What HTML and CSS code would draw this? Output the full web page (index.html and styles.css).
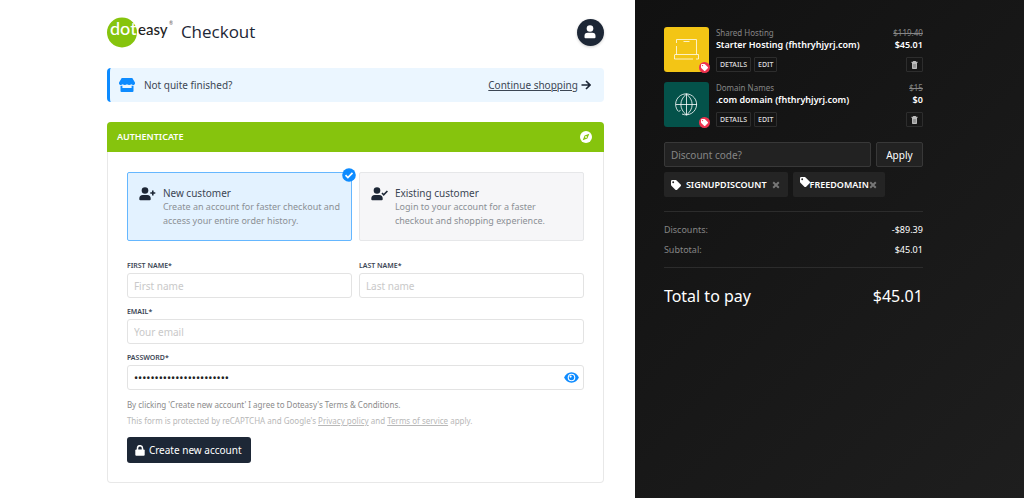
FILE: index.html
```html
<!DOCTYPE html>
<html lang="en">
<head>
    <meta charset="UTF-8">
    <meta name="viewport" content="width=device-width, initial-scale=1.0">
    <title>Doteasy - Checkout</title>
    <link rel="stylesheet" href="styles.css">
</head>
<body>
    <!-- Shared shapes -->
    <svg width="0" height="0" class="sprite" aria-hidden="true">
        <symbol id="tag" viewBox="0 0 16 16">
            <path d="M0 2a2 2 0 0 1 2-2h5.600a2 2 0 0 1 1.400.6l6.400 6.400a2 2 0 0 1 0 2.800l-5.600 5.600a2 2 0 0 1-2.800 0L.6 9A2 2 0 0 1 0 7.600zM3.500 2a1.500 1.500 0 1 0 0 3 1.500 1.500 0 0 0 0-3z"/>
        </symbol>
        <symbol id="trash" viewBox="0 0 14 16">
            <path d="M4.500 0h5l.6 1.500H13V4H1V1.500h2.900zM2 4h10v10.500a1.500 1.500 0 0 1-1.500 1.500h-7A1.500 1.500 0 0 1 2 14.500z"/>
            <path d="M4.800 6v7.500M7 6v7.500M9.200 6v7.500" stroke="#555" stroke-width=".8"/>
        </symbol>
        <symbol id="cross" viewBox="0 0 10 10">
            <path d="M1.500 1.500l7 7M8.500 1.500l-7 7" stroke="currentColor" stroke-width="2.400"/>
        </symbol>
    </svg>

    <div class="page">
        <main class="checkout">
            <div class="checkout-inner">
                <header class="top-bar">
                    <a href="#" class="logo" aria-label="doteasy">
                        <svg width="66" height="31" viewBox="0 0 66 31">
                            <circle cx="15" cy="15.500" r="15" fill="#86c40d"/>
                            <text x="3" y="18" class="logo-dot">dot</text>
                            <text x="31" y="18" class="logo-easy">easy</text>
                            <text x="62" y="8" class="logo-mark">®</text>
                        </svg>
                    </a>
                    <h1>Checkout</h1>
                    <button type="button" class="avatar" aria-label="Account">
                        <svg width="12" height="14" viewBox="0 0 12 14">
                            <circle cx="6" cy="3.500" r="3.300"/>
                            <path d="M.5 11a3.200 3.200 0 0 1 3.200-3.200h4.600A3.200 3.200 0 0 1 11.500 11v1.200a1 1 0 0 1-1 1h-9a1 1 0 0 1-1-1z"/>
                        </svg>
                    </button>
                </header>

                <div class="notice">
                    <svg class="notice-icon" width="16" height="14" viewBox="0 0 16 14">
                        <path d="M2.700 0h10.600l2.500 4.200c.6 1.400-.1 2.800-1.600 2.800-.8 0-1.400-.3-1.900-.8-.5.5-1.200.8-2.100.8S8.500 6.700 8 6.200c-.5.5-1.300.8-2.200.8s-1.600-.3-2.100-.8c-.5.5-1.100.8-1.900.8C.3 7-.4 5.600.2 4.200z"/>
                        <path d="M1.500 7.800h1.900V10h9.200V7.800h1.900v5.200a1 1 0 0 1-1 1h-11a1 1 0 0 1-1-1z"/>
                    </svg>
                    <span>Not quite finished?</span>
                    <div class="notice-link">
                        <a href="#">Continue shopping</a>
                        <svg width="10" height="10" viewBox="0 0 10 10">
                            <path d="M.5 5h8M5 1l4 4-4 4" fill="none" stroke="#1d2736" stroke-width="1.600"/>
                        </svg>
                    </div>
                </div>

                <section class="panel">
                    <div class="panel-header">
                        <h2>AUTHENTICATE</h2>
                        <svg width="12" height="12" viewBox="0 0 12 12">
                            <circle cx="6" cy="6" r="6" fill="#fff"/>
                            <path d="M9.300 2.700L7.400 7.400 2.700 9.300l1.900-4.700z" fill="#86c40d"/>
                            <circle cx="6" cy="6" r=".9" fill="#fff"/>
                        </svg>
                    </div>
                    <form class="panel-body">
                        <div class="options">
                            <label class="option selected">
                                <input type="radio" name="customer" value="new" checked>
                                <svg width="17" height="14" viewBox="0 0 17 14">
                                    <circle cx="6" cy="3.500" r="3.300"/>
                                    <path d="M.3 11.500A3.500 3.500 0 0 1 3.800 8h4.400a3.500 3.500 0 0 1 3.500 3.500v.7a1 1 0 0 1-1 1H1.300a1 1 0 0 1-1-1z"/>
                                    <path d="M13.800 3.500v5M11.300 6h5" stroke="#1d2736" stroke-width="1.600"/>
                                </svg>
                                <span class="option-text">
                                    <span class="option-title">New customer</span>
                                    <span>Create an account for faster checkout and<br>access your entire order history.</span>
                                </span>
                                <svg class="option-check" width="14" height="14" viewBox="0 0 14 14">
                                    <circle cx="7" cy="7" r="6.800" fill="#0d8bff"/>
                                    <path d="M3.500 7.200l2.400 2.400 4.600-4.700" fill="none" stroke="#fff" stroke-width="1.700"/>
                                </svg>
                            </label>
                            <label class="option">
                                <input type="radio" name="customer" value="existing">
                                <svg width="17" height="14" viewBox="0 0 17 14">
                                    <circle cx="6" cy="3.500" r="3.300"/>
                                    <path d="M.3 11.500A3.500 3.500 0 0 1 3.800 8h4.400a3.500 3.500 0 0 1 3.500 3.500v.7a1 1 0 0 1-1 1H1.300a1 1 0 0 1-1-1z"/>
                                    <path d="M11 6l1.700 1.800 3.700-3.800" fill="none" stroke="#1d2736" stroke-width="1.600"/>
                                </svg>
                                <span class="option-text">
                                    <span class="option-title">Existing customer</span>
                                    <span>Login to your account for a faster<br>checkout and shopping experience.</span>
                                </span>
                            </label>
                        </div>

                        <div class="field-row">
                            <div class="field">
                                <label for="first-name">FIRST NAME*</label>
                                <input type="text" id="first-name" placeholder="First name">
                            </div>
                            <div class="field">
                                <label for="last-name">LAST NAME*</label>
                                <input type="text" id="last-name" placeholder="Last name">
                            </div>
                        </div>
                        <div class="field">
                            <label for="email">EMAIL*</label>
                            <input type="email" id="email" placeholder="Your email">
                        </div>
                        <div class="field">
                            <label for="password">PASSWORD*</label>
                            <div class="password-box">
                                <input type="password" id="password" value="abcdefghijklmnopqrstuvw">
                                <button type="button" aria-label="Show password">
                                    <svg width="15" height="11" viewBox="0 0 15 11">
                                        <path d="M7.500.3C11 .3 13.600 2.600 14.900 5.500 13.600 8.400 11 10.700 7.500 10.700S1.400 8.400.1 5.500C1.400 2.600 4 .3 7.500.3z" fill="#0d8bff"/>
                                        <circle cx="7.500" cy="5.500" r="3.800" fill="#fff"/>
                                        <circle cx="7.500" cy="5.500" r="2.700" fill="#0d8bff"/>
                                        <circle cx="6.600" cy="4.600" r="1.100" fill="#fff"/>
                                    </svg>
                                </button>
                            </div>
                        </div>

                        <p class="terms">By clicking 'Create new account' I agree to Doteasy's Terms &amp; Conditions.</p>
                        <p class="captcha">This form is protected by reCAPTCHA and Google's <a href="#">Privacy policy</a> and <a href="#">Terms of service</a> apply.</p>
                        <button type="submit" class="submit">
                            <svg width="10" height="11" viewBox="0 0 10 11">
                                <path d="M2.500 5V3.200a2.500 2.500 0 0 1 5 0V5" fill="none" stroke="#fff" stroke-width="1.500"/>
                                <rect x=".3" y="4.600" width="9.400" height="6.200" rx="1" fill="#fff"/>
                            </svg>
                            Create new account
                        </button>
                    </form>
                </section>
            </div>
        </main>

        <aside class="summary">
            <div class="summary-inner">
                <div class="item">
                    <div class="thumb hosting">
                        <svg width="27" height="23" viewBox="0 0 27 23">
                            <path d="M3.500 5V1.500h20V16M3.500 8v8.500M10.500 3.500h6M2 16.500h23.500v4.500H23M20 21H1.500v-4.500" fill="none" stroke="#fff" stroke-opacity=".75"/>
                        </svg>
                        <span class="badge"><svg width="7" height="7"><use href="#tag"/></svg></span>
                    </div>
                    <div class="item-info">
                        <div class="line"><span>Shared Hosting</span><s>$119.40</s></div>
                        <div class="line strong"><span>Starter Hosting (fhthryhjyrj.com)</span><span>$45.01</span></div>
                        <div class="actions">
                            <button type="button">DETAILS</button>
                            <button type="button">EDIT</button>
                            <button type="button" class="remove" aria-label="Remove"><svg width="7" height="8"><use href="#trash"/></svg></button>
                        </div>
                    </div>
                </div>
                <div class="item">
                    <div class="thumb domain">
                        <svg width="23" height="23" viewBox="0 0 23 23">
                            <path d="M3 18A10.500 10.500 0 1 1 7 21M11.500 1v21M1 11.500h21M11.500 1C4 7 4 16 11.500 22M11.500 1C19 7 19 16 11.500 22M3.500 18.500l2-1" fill="none" stroke="#fff" stroke-opacity=".8"/>
                        </svg>
                        <span class="badge"><svg width="7" height="7"><use href="#tag"/></svg></span>
                    </div>
                    <div class="item-info">
                        <div class="line"><span>Domain Names</span><s>$15</s></div>
                        <div class="line strong"><span>.com domain (fhthryhjyrj.com)</span><span>$0</span></div>
                        <div class="actions">
                            <button type="button">DETAILS</button>
                            <button type="button">EDIT</button>
                            <button type="button" class="remove" aria-label="Remove"><svg width="7" height="8"><use href="#trash"/></svg></button>
                        </div>
                    </div>
                </div>

                <form class="discount">
                    <input type="text" placeholder="Discount code?" aria-label="Discount code">
                    <button type="submit">Apply</button>
                </form>
                <div class="coupons">
                    <div class="coupon">
                        <svg width="10" height="10"><use href="#tag"/></svg>
                        <span>SIGNUPDISCOUNT</span>
                        <button type="button" aria-label="Remove SIGNUPDISCOUNT"><svg width="8" height="8"><use href="#cross"/></svg></button>
                    </div>
                    <div class="coupon tight">
                        <svg width="10" height="10"><use href="#tag"/></svg>
                        <span>FREEDOMAIN</span>
                        <button type="button" aria-label="Remove FREEDOMAIN"><svg width="8" height="8"><use href="#cross"/></svg></button>
                    </div>
                </div>

                <dl class="totals">
                    <div><dt>Discounts:</dt><dd>-$89.39</dd></div>
                    <div><dt>Subtotal:</dt><dd>$45.01</dd></div>
                </dl>
                <div class="total">
                    <span>Total to pay</span>
                    <span>$45.01</span>
                </div>
            </div>
        </aside>
    </div>
</body>
</html>
```
FILE: styles.css
```css
* {
    box-sizing: border-box;
}
body {
    margin: 0;
    font-family: 'Segoe UI', 'Noto Sans', 'Open Sans', sans-serif;
    font-size: 9px;
    line-height: 14px;
    color: #3c4654;
    background-color: #fff;
}
button, input {
    font-family: inherit;
    font-size: inherit;
    line-height: inherit;
    margin: 0;
}
button {
    display: flex;
    align-items: center;
    justify-content: center;
    padding: 0;
    border: none;
    background: none;
    cursor: pointer;
}
h1, h2, p, dl, dd {
    margin: 0;
}
svg {
    flex-shrink: 0;
}
.sprite {
    position: absolute;
}
.page {
    display: flex;
    min-height: 100vh;
}
.checkout {
    flex: 0 0 62%;
    padding: 16px 31px 15px;
}
.checkout-inner {
    max-width: 497px;
    margin-left: auto;
}

/* Header */
.top-bar {
    display: flex;
    align-items: center;
    gap: 8px;
    margin-bottom: 20px;
}
.logo {
    display: flex;
}
.logo text {
    font-family: Lato, 'Open Sans', sans-serif;
}
.logo-dot {
    font-size: 18px;
    font-weight: 500;
    fill: #fff;
}
.logo-easy {
    font-size: 15px;
    font-weight: 500;
    fill: #222;
}
.logo .logo-mark {
    font-size: 5px;
    fill: #555;
}
h1 {
    font-size: 17px;
    line-height: 32px;
    font-weight: 500;
    font-family: 'Segoe UI', 'Open Sans', sans-serif;
    color: #1d2736;
}
.avatar {
    width: 27px;
    height: 27px;
    margin-left: auto;
    border-radius: 50%;
    background-color: #1d2736;
    fill: #fff;
    box-shadow: 0 1px 3px rgba(0, 0, 0, 0.2);
}

/* Continue shopping */
.notice {
    display: flex;
    align-items: center;
    gap: 9px;
    height: 34px;
    padding: 0 13px 0 9px;
    margin-bottom: 20px;
    border-left: 3px solid #0d8bff;
    border-radius: 4px;
    background-color: #ebf6ff;
    font-size: 10px;
}
.notice-icon {
    fill: #0d8bff;
}
.notice-link {
    display: flex;
    align-items: center;
    gap: 3px;
    margin-left: auto;
}
.notice-link a {
    color: inherit;
}

/* Authenticate panel */
.panel {
    border-radius: 4px;
    box-shadow: inset 0 0 0 1px #e8e8e8;
}
.panel-header {
    display: flex;
    align-items: center;
    justify-content: space-between;
    height: 30px;
    padding: 0 12px 0 10px;
    border-radius: 4px 4px 0 0;
    background-color: #86c40d;
}
.panel-header h2 {
    font-size: 9px;
    font-weight: 600;
    color: #fff;
}
.panel-body {
    padding: 20px;
}
.options, .field-row {
    display: grid;
    grid-template-columns: 1fr 1fr;
    gap: 7px;
}
.options {
    margin-bottom: 18px;
}
.option {
    position: relative;
    display: flex;
    gap: 7px;
    padding: 13px 5px 12px 11px;
    border: 1px solid #e6e7e9;
    border-radius: 2px;
    background-color: #f6f6f8;
    color: #8b9095;
    fill: #1d2736;
    cursor: pointer;
}
.option.selected {
    border-color: #65b7ff;
    background-color: #e3f2ff;
}
.option input {
    position: absolute;
    opacity: 0;
}
.option > svg {
    margin-top: 1px;
}
.option-text span {
    display: block;
}
.option-text .option-title {
    font-size: 10px;
    color: #3c4654;
}
.option > .option-check {
    position: absolute;
    top: -6px;
    right: -5px;
}
.field {
    margin-bottom: 7px;
}
.field label {
    display: block;
    font-size: 7px;
    font-weight: 600;
    color: #3c4654;
}
.field input {
    display: block;
    width: 100%;
    height: 25px;
    padding: 0 6px;
    border: 1px solid #e3e3e3;
    border-radius: 3px;
    font-size: 10px;
    color: #222;
    outline: none;
}
.field input::placeholder {
    color: #c9c9c9;
    opacity: 1;
}
.password-box {
    position: relative;
}
.field .password-box input {
    font-size: 11px;
}
.password-box button {
    position: absolute;
    top: 0;
    right: 5px;
    height: 100%;
}
.terms, .captcha {
    font-size: 8px;
    line-height: 16px;
}
.terms {
    color: #8b8b8b;
}
.captcha {
    color: #b8b8b8;
    margin-bottom: 8px;
}
.captcha a {
    color: inherit;
}
.submit {
    gap: 4px;
    height: 26px;
    padding: 0 9px 0 8px;
    border-radius: 3px;
    background-color: #1d2736;
    font-size: 10px;
    color: #fff;
}

/* Order summary */
.summary {
    flex: 1;
    padding: 27px 29px;
    background: linear-gradient(135deg, #111, #1e1e1e);
    color: #fff;
}
.summary-inner {
    max-width: 259px;
}
.item {
    display: flex;
    gap: 7px;
    margin-bottom: 10px;
}
.thumb {
    position: relative;
    display: flex;
    align-items: center;
    justify-content: center;
    width: 45px;
    height: 45px;
    border-radius: 3px;
}
.hosting {
    background-color: #f3c515;
}
.domain {
    background-color: #04524a;
}
.badge {
    position: absolute;
    right: -1px;
    bottom: -1px;
    display: flex;
    align-items: center;
    justify-content: center;
    width: 11px;
    height: 11px;
    border-radius: 50%;
    background-color: #ef3350;
    fill: #fff;
}
.item-info {
    flex: 1;
}
.line {
    display: flex;
    justify-content: space-between;
    font-size: 8px;
    line-height: 11px;
    color: #868686;
}
.line.strong {
    font-size: 9px;
    line-height: 14px;
    font-weight: 600;
    color: #fff;
}
.actions {
    display: flex;
    gap: 3px;
    margin-top: 5px;
}
.actions button {
    height: 15px;
    padding: 0 3px;
    border: 1px solid #2d2d2d;
    border-radius: 1px;
    font-size: 7px;
    font-weight: 500;
    color: #ddd;
}
.actions .remove {
    width: 17px;
    margin-left: auto;
    fill: #bbb;
}
.discount {
    display: flex;
    gap: 5px;
    margin: 15px 0 5px;
}
.discount input, .discount button {
    height: 25px;
    border: 1px solid #383838;
    border-radius: 2px;
    background-color: #222;
    font-size: 10px;
    color: #fff;
}
.discount input {
    flex: 1;
    min-width: 0;
    padding: 0 6px;
}
.discount input::placeholder {
    color: #858585;
    opacity: 1;
}
.discount button {
    width: 47px;
}
.coupons {
    display: flex;
    gap: 5px;
    margin-bottom: 14px;
}
.coupon {
    display: flex;
    align-items: center;
    gap: 5px;
    height: 25px;
    padding: 0 8px 0 7px;
    border-radius: 2px;
    background-color: #242424;
    font-size: 9px;
    font-weight: 600;
    fill: #fff;
}
.coupon button {
    color: #777;
}
.coupon.tight {
    gap: 0;
}
.coupon.tight > svg {
    margin-bottom: 5px;
}
.totals {
    padding: 8px 0 7px;
    border-top: 1px solid #2c2c2c;
    border-bottom: 1px solid #2c2c2c;
}
.totals div {
    display: flex;
    justify-content: space-between;
    line-height: 20px;
}
.totals dt {
    font-size: 9px;
    color: #858585;
}
.total {
    display: flex;
    justify-content: space-between;
    padding-top: 17px;
    font-size: 16px;
    line-height: 22px;
}
```
